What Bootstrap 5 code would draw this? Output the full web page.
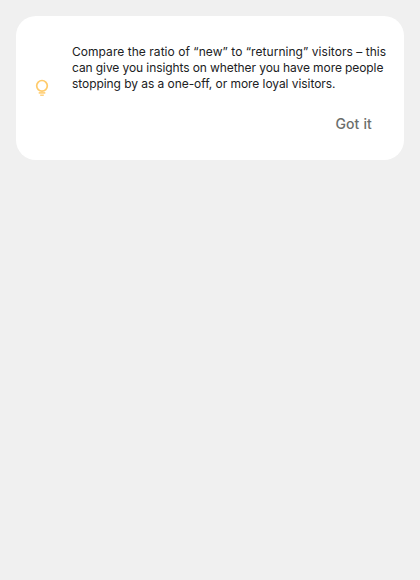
<!DOCTYPE html>
<html lang="en">
<head>
<meta charset="utf-8">
<meta name="viewport" content="width=device-width, initial-scale=1">
<title>Insight tip</title>
<link href="https://cdn.jsdelivr.net/npm/bootstrap@5.3.0/dist/css/bootstrap.min.css" rel="stylesheet">
<style>
body { background: #f0f0f0; font-family: Inter, Roboto, sans-serif; }
.tip-card { height: 144px; border-radius: 20px; padding: 0 16px; }
.tip-icon { width: 20px; height: 20px; }
.tip-copy { margin-left: 20px; width: 316px; padding-top: 8px; }
.tip-text { font-size: 12px; line-height: 16px; color: #202123; }
.tip-text span:nth-child(1) { letter-spacing: .045px; }
.tip-text span:nth-child(2) { letter-spacing: -.09px; }
.tip-text span:nth-child(3) { letter-spacing: -.06px; }
.tip-btn { font-size: 14px; line-height: 20px; font-weight: 500; letter-spacing: .15px; color: #6b6e6c; padding: 6px 16px; margin-top: 16px; }
</style>
</head>
<body>
<main class="p-3">
  <section class="card border-0 tip-card flex-row align-items-center">
    <svg class="tip-icon flex-shrink-0" viewBox="0 0 20 20" fill="none" stroke="#ffcb6b" aria-hidden="true">
      <circle cx="10" cy="7.8" r="5.3" stroke-width="1.7"/>
      <path d="M6.7 14.9h6.6" stroke-width="1.5"/>
      <path d="M8.2 17.2h3.6" stroke-width="1.3"/>
    </svg>
    <div class="tip-copy d-flex flex-column align-items-end">
      <p class="tip-text mb-0 text-nowrap align-self-start"><span class="d-block">Compare the ratio of “new” to “returning” visitors – this</span><span class="d-block">can give you insights on whether you have more people</span><span class="d-block">stopping by as a one-off, or more loyal visitors.</span></p>
      <button type="button" class="btn border-0 tip-btn">Got it</button>
    </div>
  </section>
</main>
<script src="https://cdn.jsdelivr.net/npm/bootstrap@5.3.0/dist/js/bootstrap.bundle.min.js"></script>
</body>
</html>
